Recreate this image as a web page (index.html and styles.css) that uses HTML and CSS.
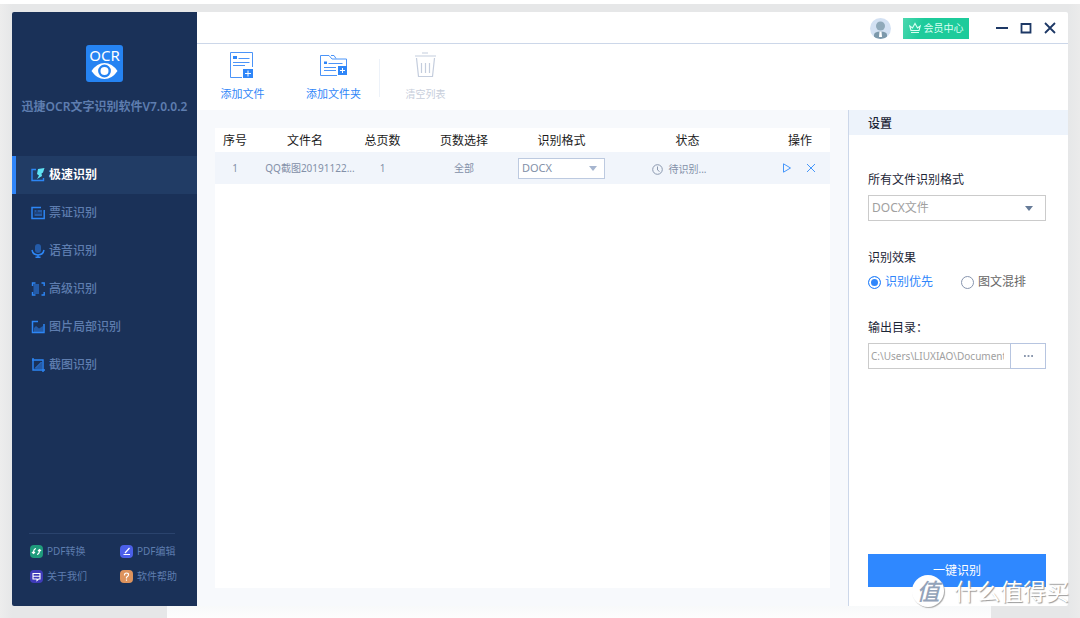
FILE: index.html
```html
<!DOCTYPE html>
<html lang="zh-CN">
<head>
<meta charset="utf-8">
<meta name="viewport" content="width=device-width, initial-scale=1">
<title>迅捷OCR文字识别软件</title>
<link rel="stylesheet" href="styles.css">
</head>
<body>
<div class="window">
  <aside class="sidebar">
    <div class="brand">
      <svg class="brand-logo" viewBox="0 0 37 37" aria-hidden="true">
        <rect width="37" height="37" rx="3" fill="#2583f2"/>
        <text x="18.5" y="16" text-anchor="middle" font-size="15" fill="#fff">OCR</text>
        <path d="M5.500 26Q11 18 18.500 18T31.500 26Q26 34 18.500 34T5.500 26Z" fill="#fff"/>
        <circle cx="18.500" cy="26" r="5.200" fill="#fff" stroke="#2583f2" stroke-width="2.400"/>
      </svg>
      <h1 class="brand-name">迅捷OCR文字识别软件V7.0.0.2</h1>
    </div>
    <nav class="nav">
      <a class="nav-item active" href="#fast">
        <svg class="nav-icon" viewBox="0 0 14 14"><path d="M5 1.500H1V12.500H12.500V10" fill="none" stroke="#2d86f5" stroke-width="1.400"/><path d="M7 1L13.500 0L12 4.500L10.500 5.500L11 8L6 11L8 7.500L6 6Z" fill="#5fe3f4"/></svg>极速识别</a>
      <a class="nav-item" href="#ticket">
        <svg class="nav-icon" viewBox="0 0 14 14"><path d="M10 1.500H1V12.500H13.200V4" fill="none" stroke="#2d86f5" stroke-width="1.500"/><path d="M3.500 4H11V10H3.500Z" fill="#245ba8"/><path d="M4 7H10.500M6 4V6" stroke="#1a3158"/></svg>票证识别</a>
      <a class="nav-item" href="#voice">
        <svg class="nav-icon" viewBox="0 0 14 14"><rect x="4" y="0" width="6" height="9" rx="3" fill="#245ba8"/><path d="M1 6Q2 11 7 11T13 6M7 11V13M4.500 13.300H9.500" fill="none" stroke="#2d86f5" stroke-width="1.500"/></svg>语音识别</a>
      <a class="nav-item" href="#advanced">
        <svg class="nav-icon" viewBox="0 0 14 14"><path d="M2.500 2H8V12H2.500Z" fill="#245ba8"/><path d="M4.500 1H1.500V4M1.500 10V13H4.500M10.500 1H13.200V4M13.200 10V13H10.500" fill="none" stroke="#2d86f5" stroke-width="1.400"/></svg>高级识别</a>
      <a class="nav-item" href="#partial">
        <svg class="nav-icon" viewBox="0 0 14 14"><path d="M3 8L5 6L8 8.500L12 6V12H3Z" fill="#245ba8"/><path d="M7 1.500H1.500V12.500H13V4" fill="none" stroke="#2d86f5" stroke-width="1.500"/></svg>图片局部识别</a>
      <a class="nav-item" href="#capture">
        <svg class="nav-icon" viewBox="0 0 14 14"><path d="M11 4V11H4Z" fill="#245ba8"/><path d="M2 0V12H14M1 2H12V14" fill="none" stroke="#2d86f5" stroke-width="1.400"/><path d="M4 10.500L10.500 4" stroke="#2d86f5"/></svg>截图识别</a>
    </nav>
    <div class="links">
      <a class="link" href="#convert"><svg class="link-icon" viewBox="0 0 13 13"><rect width="13" height="13" rx="4" fill="#1f9b7c"/><path d="M6 3.500Q3.500 4 3.500 8M2 7L3.500 8.500L5 7M7 9.500Q9.500 9 9.500 5M8 6L9.500 4.500L11 6" fill="none" stroke="#fff" stroke-width="1.200"/></svg>PDF转换</a>
      <a class="link" href="#edit"><svg class="link-icon" viewBox="0 0 13 13"><rect width="13" height="13" rx="4" fill="#4b5fe8"/><path d="M9.500 3L5 8M3.500 9.500H10" fill="none" stroke="#fff" stroke-width="1.200"/></svg>PDF编辑</a>
      <a class="link" href="#about"><svg class="link-icon" viewBox="0 0 13 13"><rect width="13" height="13" rx="4" fill="#3f3bb8"/><path d="M3 3.500H10V9H8.500L7 10.500V9H3ZM3 6.200H10" fill="none" stroke="#fff" stroke-width="1.100"/></svg>关于我们</a>
      <a class="link" href="#help"><svg class="link-icon" viewBox="0 0 13 13"><rect width="13" height="13" rx="4" fill="#dd935d"/><path d="M4.500 5.500Q4.300 3 6.500 3T8.500 5Q8.500 6 6.500 7.300V8.500M6.500 9.500V10.700" fill="none" stroke="#fff" stroke-width="1.200"/></svg>软件帮助</a>
    </div>
  </aside>

  <div class="content">
    <header class="titlebar">
      <button class="plain" type="button" aria-label="账户">
        <svg class="avatar" viewBox="0 0 21 21"><clipPath id="face"><circle cx="10.500" cy="10.500" r="10.500"/></clipPath><g clip-path="url(#face)"><rect width="21" height="21" fill="#d3e1f3"/><path d="M4 21V17Q4 13.500 10.500 13.500T17 17V21Z" fill="#7d99ab"/><circle cx="10.500" cy="8" r="4.500" fill="#8fa9ba"/><path d="M9.500 13.500H11.500L12 19H9Z" fill="#fff"/></g></svg>
      </button>
      <button class="member" type="button">
        <svg class="crown" viewBox="0 0 12 12"><path d="M.8 4L3.500 6L6 1.500L8.500 6L11.200 4L10 8.500H2ZM2 10.500H10" fill="none" stroke="#d9fff2" stroke-width="1.100"/></svg>会员中心</button>
      <div class="controls">
        <button class="plain" type="button" aria-label="最小化"><svg class="control" viewBox="0 0 12 12"><path d="M0 6H12" stroke="#1d3865" stroke-width="1.800"/></svg></button>
        <button class="plain" type="button" aria-label="最大化"><svg class="control" viewBox="0 0 12 12"><path d="M1.500 2H10.500V10.500H1.500Z" fill="none" stroke="#1d3865" stroke-width="1.800"/></svg></button>
        <button class="plain" type="button" aria-label="关闭"><svg class="control" viewBox="0 0 12 12"><path d="M1 1L11 11M11 1L1 11" stroke="#1d3865" stroke-width="1.800"/></svg></button>
      </div>
    </header>

    <div class="toolbar">
      <button class="tool" type="button">
        <svg class="tool-icon" viewBox="0 0 28 28"><path d="M13 26.500H1.500V1.500H23.500V16" fill="none" stroke="#4b94f8"/><path d="M4 5H8V8H4Z" fill="#2f86f8"/><path d="M9.500 7.500H20.500M4 11.500H20.500M4 14.500H16" stroke="#4b94f8"/><path d="M14 18H24V27H14Z" fill="#2f86f8"/><path d="M16 22.500H22M19 19.500V25.500" stroke="#fff"/></svg>添加文件</button>
      <button class="tool" type="button">
        <svg class="tool-icon" viewBox="0 0 28 28"><path d="M17 24.500H.5V4.500H9L12 8H26.500V17M11 4.500H14L16 7.500" fill="none" stroke="#4b94f8"/><path d="M4 10.500H7V13H4Z" fill="#2f86f8"/><path d="M8.500 12.500H22.500M4 16.500H16M4 19.500H16" stroke="#4b94f8"/><path d="M18 15H27V24H18Z" fill="#2f86f8"/><path d="M20 19.500H25M22.500 17V22" stroke="#fff"/></svg>添加文件夹</button>
      <span class="divider"></span>
      <button class="tool clear" type="button" disabled>
        <svg class="tool-icon" viewBox="0 0 28 28"><path d="M10 2H16M3 5H24M4.500 7L6.500 25.500H20.500L22.500 7M9.500 12V22M13.500 12V22M17.500 12V22" fill="none" stroke="#c4cddd" stroke-width="1.200"/></svg>清空列表</button>
    </div>

    <div class="workspace">
      <main class="main">
        <div class="card">
          <table class="files">
            <colgroup><col class="c-index"><col class="c-name"><col class="c-pages"><col class="c-range"><col class="c-format"><col class="c-state"><col class="c-actions"></colgroup>
            <thead>
              <tr><th>序号</th><th>文件名</th><th>总页数</th><th>页数选择</th><th>识别格式</th><th>状态</th><th>操作</th></tr>
            </thead>
            <tbody>
              <tr>
                <td>1</td>
                <td class="file-name">QQ截图20191122...</td>
                <td>1</td>
                <td>全部</td>
                <td><span class="picker small"><select aria-label="识别格式"><option>DOCX</option></select><svg class="arrow" viewBox="0 0 8 5"><path d="M0 0H8L4 5Z"/></svg></span></td>
                <td><span class="state"><svg class="clock" viewBox="0 0 11 11"><circle cx="5.500" cy="5.500" r="4.800" fill="none" stroke="#8b98ae"/><path d="M5.500 2.500V6L7.500 7.500" fill="none" stroke="#8b98ae"/></svg>待识别...</span></td>
                <td><span class="actions">
                  <button class="plain" type="button" aria-label="开始"><svg class="action" viewBox="0 0 10 10"><path d="M1.500 .8L8.500 5L1.500 9.200Z" fill="none" stroke="#4596fa"/></svg></button>
                  <button class="plain" type="button" aria-label="移除"><svg class="action" viewBox="0 0 10 10"><path d="M1 1L9 9M9 1L1 9" stroke="#4596fa"/></svg></button>
                </span></td>
              </tr>
            </tbody>
          </table>
        </div>
      </main>

      <form class="settings">
        <h2 class="settings-title">设置</h2>
        <div class="settings-body">
          <div class="field">
            <label class="label" for="format">所有文件识别格式</label>
            <span class="picker"><select id="format"><option>DOCX文件</option></select><svg class="arrow" viewBox="0 0 8 5"><path d="M0 0H8L4 5Z"/></svg></span>
          </div>
          <fieldset class="field">
            <legend class="label">识别效果</legend>
            <div class="radios">
              <label class="radio"><input type="radio" name="effect" checked><span>识别优先</span></label>
              <label class="radio"><input type="radio" name="effect"><span>图文混排</span></label>
            </div>
          </fieldset>
          <div class="field">
            <label class="label" for="output">输出目录：</label>
            <div class="path">
              <input id="output" class="path-input" type="text" value="C:\Users\LIUXIAO\Documents">
              <button class="browse" type="button" aria-label="浏览"><svg class="dots" viewBox="0 0 10 2"><path d="M0 0H2V2H0ZM4 0H6V2H4ZM8 0H10V2H8Z" fill="#8b98ae"/></svg></button>
            </div>
          </div>
          <button class="start" type="button">一键识别</button>
        </div>
      </form>
    </div>
  </div>
</div>
<div class="watermark"><span class="seal">值</span><span>什么值得买</span></div>
</body>
</html>
```

FILE: styles.css
```css
* {
  box-sizing: border-box;
}

body {
  margin: 0;
  min-height: 100vh;
  padding: 12px;
  display: flex;
  position: relative;
  overflow: hidden;
  font-family: "Noto Sans", "Noto Sans CJK SC", sans-serif;
  font-size: 12px;
  line-height: 18px;
  color: #1c2536;
  background:
    linear-gradient(#fff, #fff) top / 100% 4px no-repeat,
    linear-gradient(#f7f9fa, #fdfdfd) 167px 100% / calc(100% - 256px) 12px no-repeat,
    linear-gradient(90deg, #ededed, #e6e7e8 12px, #e6e7e8 calc(100% - 12px), #ebebeb);
}

button,
input,
select {
  font: inherit;
  color: inherit;
  margin: 0;
}

button {
  border: 0;
  padding: 0;
  background: none;
  cursor: pointer;
}

a {
  color: inherit;
  text-decoration: none;
}

svg {
  display: block;
  flex: none;
}

.window {
  flex: 1;
  min-width: 0;
  display: flex;
  background: #fff;
  border-radius: 2px;
  overflow: hidden;
}

.sidebar {
  flex: none;
  width: 185px;
  display: flex;
  flex-direction: column;
  background: #1a3158;
  color: #5e7daf;
}

.brand {
  height: 144px;
  padding-top: 33px;
  display: flex;
  flex-direction: column;
  align-items: center;
  gap: 16px;
}

.brand-logo {
  width: 37px;
  height: 37px;
  overflow: visible;
}

.brand-name {
  margin: 0;
  font-size: 12px;
  font-weight: 600;
  white-space: nowrap;
}

.nav-item {
  display: flex;
  align-items: center;
  gap: 4px;
  height: 38px;
  padding-left: 15px;
  border-left: 4px solid transparent;
  font-weight: 500;
  line-height: 20px;
}

.nav-item.active {
  border-color: #2f86fb;
  background: #213c65;
  color: #fff;
  font-weight: 700;
}

.nav-icon {
  width: 14px;
  height: 14px;
}

.links {
  margin: auto 22px 21px 17px;
  padding-top: 8px;
  border-top: 1px solid #2a436d;
  display: grid;
  grid-template-columns: 90px auto;
  row-gap: 7px;
  font-size: 10px;
}

.link {
  display: flex;
  align-items: center;
  gap: 4px;
  padding-left: 1px;
  white-space: nowrap;
}

.link-icon {
  width: 13px;
  height: 13px;
}

.content {
  flex: 1;
  min-width: 0;
  display: flex;
  flex-direction: column;
}

.titlebar {
  height: 32px;
  padding: 1px 12px 0 0;
  border-bottom: 1px solid #ccd7e9;
  display: flex;
  align-items: center;
  justify-content: flex-end;
}

.avatar {
  width: 21px;
  height: 21px;
}

.member {
  margin: 0 27px 0 12px;
  width: 66px;
  height: 21px;
  display: flex;
  align-items: center;
  justify-content: center;
  gap: 3px;
  background: linear-gradient(110deg, #4bd8af, #1dcb9b 30%);
  color: #d9fff2;
  font-size: 10px;
}

.crown {
  width: 12px;
  height: 12px;
}

.controls {
  display: flex;
  gap: 12px;
}

.control {
  width: 12px;
  height: 12px;
}

.toolbar {
  height: 66px;
  padding: 7px 0 0 18px;
  display: flex;
  align-items: flex-start;
}

.tool {
  display: flex;
  flex-direction: column;
  align-items: center;
  gap: 6px;
  width: 55px;
  font-size: 11px;
  color: #2f86f8;
  white-space: nowrap;
}

.tool + .tool {
  margin-left: 36px;
}

.tool:disabled {
  color: #c7cedb;
  cursor: default;
}

.tool.clear {
  font-size: 10px;
}

.tool-icon {
  width: 28px;
  height: 28px;
}

.divider {
  width: 1px;
  height: 38px;
  margin: 8px 18px 0;
  background: #edf2f9;
}

.workspace {
  flex: 1;
  display: flex;
}

.main {
  flex: 1;
  min-width: 0;
  display: flex;
  padding: 18px;
  background: #f7f9fc;
}

.card {
  flex: 1;
  min-width: 0;
  background: #fff;
}

.files {
  width: 100%;
  table-layout: fixed;
  border-collapse: collapse;
  text-align: center;
}

.files th {
  height: 24px;
  padding: 2px 0 0;
  font-weight: 400;
  color: #1b1b1b;
}

.files td {
  height: 32px;
  padding: 0;
  background: #f1f5fb;
  font-size: 10px;
  color: #8390a8;
  white-space: nowrap;
}

.files .file-name {
  padding-left: 10px;
}

.c-index { width: 40px; }
.c-name { width: 100px; }
.c-pages { width: 55px; }
.c-range { width: 108px; }
.c-format { width: 87px; }
.c-actions { width: 60px; }

.picker {
  display: grid;
  align-items: center;
  color: #a0a0a0;
}

.picker select {
  grid-area: 1 / 1;
  width: 100%;
  height: 26px;
  padding: 0 3px;
  appearance: none;
  border: 1px solid #cbcbcb;
  border-radius: 0;
  background: #fff;
}

.arrow {
  grid-area: 1 / 1;
  justify-self: end;
  width: 10px;
  height: 5px;
  margin-right: 12px;
  fill: #667b98;
}

.picker.small {
  font-size: 11px;
  color: #8390a8;
}

.picker.small select {
  height: 21px;
  border-color: #bdcae0;
}

.picker.small .arrow {
  width: 8px;
  margin-right: 8px;
  fill: #a6b5cf;
}

.state {
  display: flex;
  align-items: center;
  justify-content: center;
  gap: 5px;
  padding: 2px 16px 0 0;
}

.clock {
  width: 11px;
  height: 11px;
}

.actions {
  display: flex;
  justify-content: center;
  gap: 14px;
  padding-right: 3px;
}

.action {
  width: 10px;
  height: 10px;
}

.settings {
  flex: none;
  width: 220px;
  display: flex;
  flex-direction: column;
  border-left: 1px solid #ccd7e9;
}

.settings-title {
  margin: 0;
  padding: 5px 19px 2px;
  background: #edf3fb;
  font-size: 12px;
  font-weight: 500;
}

.settings-body {
  flex: 1;
  display: flex;
  flex-direction: column;
  gap: 28px;
  padding: 36px 22px 19px 19px;
}

.field {
  min-width: 0;
  margin: 0;
  padding: 0;
  border: 0;
}

.label {
  display: block;
  padding: 0;
  margin-bottom: 6px;
}

.radios {
  display: flex;
  gap: 28px;
  color: #666;
}

.radio {
  display: flex;
  align-items: center;
  gap: 4px;
}

.radio input {
  appearance: none;
  width: 13px;
  height: 13px;
  border: 1px solid #8795ae;
  border-radius: 50%;
}

.radio input:checked {
  border-color: #2f86fb;
  background: #2f86fb;
  box-shadow: inset 0 0 0 2px #fff;
}

.radio input:checked + span {
  color: #2f86fb;
}

.path {
  display: flex;
}

.path-input {
  flex: 1;
  min-width: 0;
  height: 26px;
  padding: 0 6px 0 2px;
  border: 1px solid #cbcbcb;
  border-right: 0;
  font-size: 10px;
  color: #a0a0a0;
}

.browse {
  width: 36px;
  height: 26px;
  border: 1px solid #b7c5e0;
  display: grid;
  place-items: center;
}

.dots {
  width: 9px;
  height: 2px;
}

.start {
  height: 33px;
  margin-top: auto;
  background: #2f88ff;
  color: #fff;
}

.watermark {
  position: absolute;
  right: 11px;
  bottom: 11px;
  display: flex;
  align-items: center;
  gap: 10px;
  color: #fff;
  font-size: 23px;
  line-height: 32px;
  text-shadow: 1px 1px 1px #999;
  pointer-events: none;
}

.seal {
  width: 32px;
  height: 32px;
  border-radius: 50%;
  background: #fff;
  box-shadow: 1px 1px 1px #aaa;
  color: #93a3b9;
  font-weight: 500;
  font-style: italic;
  text-align: center;
  text-shadow: none;
}
```
